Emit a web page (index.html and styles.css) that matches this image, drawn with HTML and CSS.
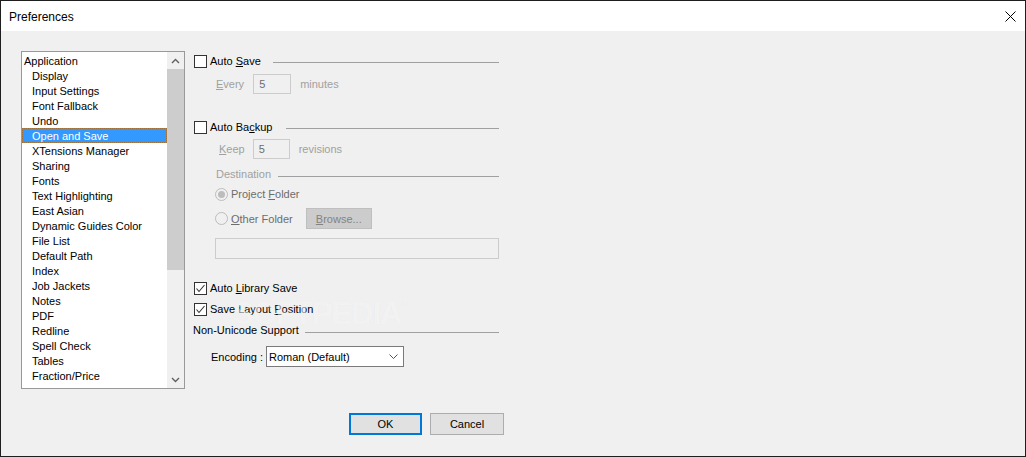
FILE: index.html
```html
<!DOCTYPE html>
<html>
<head>
<meta charset="utf-8">
<link rel="stylesheet" href="styles.css">
</head>
<body>
<div class="window">
  <div class="titlebar">
    <span class="title">Preferences</span>
    <svg class="close" width="11" height="11" viewBox="0 0 11 11"><path d="M0.5 0.5 L10.5 10.5 M10.5 0.5 L0.5 10.5" stroke="#000" stroke-width="1" fill="none"/></svg>
  </div>
  <div class="content">
    <div class="main">
      <div class="listbox">
        <ul class="items">
          <li class="root">Application</li>
          <li>Display</li>
          <li>Input Settings</li>
          <li>Font Fallback</li>
          <li>Undo</li>
          <li class="selected">Open and Save</li>
          <li>XTensions Manager</li>
          <li>Sharing</li>
          <li>Fonts</li>
          <li>Text Highlighting</li>
          <li>East Asian</li>
          <li>Dynamic Guides Color</li>
          <li>File List</li>
          <li>Default Path</li>
          <li>Index</li>
          <li>Job Jackets</li>
          <li>Notes</li>
          <li>PDF</li>
          <li>Redline</li>
          <li>Spell Check</li>
          <li>Tables</li>
          <li>Fraction/Price</li>
        </ul>
        <div class="scrollbar">
          <div class="sb-btn"><svg width="9" height="6" viewBox="0 0 9 6"><path d="M1 5 L4.5 1.5 L8 5" stroke="#606060" stroke-width="1.4" fill="none"/></svg></div>
          <div class="sb-track"><div class="thumb"></div></div>
          <div class="sb-btn"><svg width="9" height="6" viewBox="0 0 9 6"><path d="M1 1 L4.5 4.5 L8 1" stroke="#606060" stroke-width="1.4" fill="none"/></svg></div>
        </div>
      </div>

      <div class="panel">
        <div class="row check-row r-autosave">
          <span class="cb"></span><span class="label">Auto <u>S</u>ave</span><span class="rule rule-save"></span>
        </div>
        <div class="row field-row r-every">
          <span class="dim"><u>E</u>very</span><span class="num num-every">5</span><span class="dim unit">minutes</span>
        </div>

        <div class="row check-row r-autobackup">
          <span class="cb"></span><span class="label">Auto Ba<u>c</u>kup</span><span class="rule rule-backup"></span>
        </div>
        <div class="row field-row r-keep">
          <span class="dim"><u>K</u>eep</span><span class="num num-keep">5</span><span class="dim unit">revisions</span>
        </div>
        <div class="row group-row r-dest">
          <span class="dim">Destination</span><span class="rule rule-dest"></span>
        </div>
        <div class="row check-row r-project">
          <svg class="radio" width="13" height="13" viewBox="0 0 13 13"><circle cx="6.5" cy="6.5" r="6" fill="#f0f0f0" stroke="#bcbcbc"/><circle cx="6.5" cy="6.5" r="3.5" fill="#bcbcbc"/></svg>
          <span class="label dim2">Project <u>F</u>older</span>
        </div>
        <div class="row r-other">
          <svg class="radio" width="13" height="13" viewBox="0 0 13 13"><circle cx="6.5" cy="6.5" r="6" fill="#f0f0f0" stroke="#bcbcbc"/></svg>
          <span class="label dim2"><u>O</u>ther Folder</span>
          <span class="browse"><u>B</u>rowse...</span>
        </div>
        <div class="pathfield"></div>

        <div class="row check-row r-library">
          <span class="cb"><svg width="11" height="11" viewBox="0 0 11 11"><path d="M1.5 5.5 L4 8.5 L9.5 2" stroke="#333" stroke-width="1.1" fill="none"/></svg></span><span class="label">Auto <u>L</u>ibrary Save</span>
        </div>
        <div class="row check-row r-layout">
          <span class="cb"><svg width="11" height="11" viewBox="0 0 11 11"><path d="M1.5 5.5 L4 8.5 L9.5 2" stroke="#333" stroke-width="1.1" fill="none"/></svg></span><span class="label">Save Layout <u>P</u>osition</span>
        </div>
        <div class="row group-row r-unicode">
          <span>Non-Unicode Support</span><span class="rule rule-unicode"></span>
        </div>
        <div class="row r-encoding">
          <span>Encoding :</span>
          <div class="select"><span>Roman (Default)</span><svg width="9" height="6" viewBox="0 0 9 6"><path d="M0.5 0.5 L4.5 4.5 L8.5 0.5" stroke="#555" stroke-width="1" fill="none"/></svg></div>
        </div>
      </div>
    </div>
    <div class="buttons">
      <span class="btn btn-ok">OK</span>
      <span class="btn btn-cancel">Cancel</span>
    </div>
  </div>
  <div class="watermark">SOFTPEDIA<sup>®</sup></div>
</div>
</body>
</html>
```
FILE: styles.css
```css
* { box-sizing: border-box; }
html, body { margin: 0; padding: 0; }
body {
  width: 1026px;
  height: 457px;
  overflow: hidden;
  background: #f0f0f0;
  font-family: "Liberation Sans", Arial, sans-serif;
  font-size: 11px;
  color: #000;
}
u { text-decoration: underline; text-underline-offset: 1px; }

.window {
  width: 1026px;
  height: 457px;
  border: 1px solid #1e1e1e;
  background: #f0f0f0;
  position: relative;
  display: flex;
  flex-direction: column;
}

.titlebar {
  height: 30px;
  flex: none;
  background: #fff;
  display: flex;
  align-items: center;
  justify-content: space-between;
  padding: 1px 9px 0 8px;
}
.title { font-size: 12px; }
.close { display: block; }

.content { padding: 20px 0 0 20px; }
.main { display: flex; align-items: flex-start; }

.listbox {
  width: 164px;
  height: 338px;
  border: 1px solid #999;
  background: #fff;
  display: flex;
}
.items {
  flex: 1;
  margin: 0;
  padding: 1px 0 0 0;
  list-style: none;
}
.items li {
  height: 15px;
  line-height: 17px;
  padding-left: 10px;
  white-space: nowrap;
}
.items li.root { padding-left: 2px; }
.items li.selected {
  background: #3399ff;
  color: #fff;
  outline: 1px dotted #a0703a;
  outline-offset: -1px;
}

.scrollbar {
  width: 17px;
  flex: none;
  background: #f0f0f0;
  display: flex;
  flex-direction: column;
}
.sb-btn {
  height: 17px;
  display: flex;
  align-items: center;
  justify-content: center;
}
.sb-btn svg { display: block; }
.sb-track { flex: 1; }
.thumb { height: 201px; background: #cdcdcd; }

.panel {
  width: 306px;
  margin-left: 8px;
  display: flex;
  flex-direction: column;
}
.row { display: flex; align-items: center; white-space: nowrap; }
.check-row { height: 16px; }
.cb {
  width: 13px;
  height: 13px;
  flex: none;
  margin-left: 1px;
  border: 1px solid #333;
  background: #fff;
  display: flex;
  align-items: center;
  justify-content: center;
}
.cb svg { display: block; }
.label { margin-left: 3px; }
.rule { flex: 1; height: 1px; background: #a0a0a0; margin-top: 2px; }
.dim { color: #a0a0a0; }
.dim2 { color: #6d6d6d; }

.r-autosave { margin-top: 2px; }
.rule-save { margin-left: 12px; }
.field-row { height: 20px; }
.r-every { margin-top: 5px; padding-left: 23px; }
.num {
  height: 20px;
  border: 1px solid #ccc;
  background: #f0f0f0;
  color: #6d6d6d;
  padding-left: 5px;
  line-height: 18px;
}
.num-every { width: 38px; margin-left: 9px; }
.unit { margin-left: 9px; }

.r-autobackup { margin-top: 25px; }
.rule-backup { margin-left: 14px; }
.r-keep { margin-top: 4px; padding-left: 26px; }
.num-keep { width: 37px; margin-left: 8px; }

.group-row { height: 14px; }
.r-dest { margin-top: 8px; padding-left: 23px; }
.rule-dest { margin-left: 7px; margin-top: 5px; }

.radio { display: block; flex: none; margin-left: 22px; }
.r-project { margin-top: 5px; }
.r-other { margin-top: 6px; height: 21px; }
.browse {
  margin-left: 13px;
  width: 66px;
  height: 21px;
  background: #cccccc;
  border: 1px solid #bfbfbf;
  color: #838383;
  display: flex;
  align-items: center;
  justify-content: center;
}
.pathfield {
  margin-top: 9px;
  margin-left: 22px;
  width: 284px;
  height: 21px;
  border: 1px solid #ccc;
  background: #f0f0f0;
}

.r-library { margin-top: 21px; }
.r-layout { margin-top: 5px; }
.r-unicode { margin-top: 6px; }
.rule-unicode { margin-left: 6px; margin-top: 4px; }

.r-encoding { margin-top: 9px; padding-left: 18px; }
.select {
  margin-left: 3px;
  width: 138px;
  height: 21px;
  border: 1px solid #7a7a7a;
  background: #fff;
  display: flex;
  align-items: center;
  justify-content: space-between;
  padding: 0 5px 0 2px;
}
.select svg { display: block; }

.buttons {
  display: flex;
  gap: 8px;
  margin-top: 24px;
  padding-left: 328px;
}
.btn {
  height: 22px;
  background: #e1e1e1;
  display: flex;
  align-items: center;
  justify-content: center;
}
.btn-ok { width: 73px; border: 2px solid #0078d7; }
.btn-cancel { width: 74px; border: 1px solid #adadad; }

.watermark {
  position: absolute;
  left: 232px;
  top: 295px;
  font-family: "Liberation Sans Narrow", "Liberation Sans", Arial, sans-serif;
  font-size: 31px;
  font-weight: 700;
  letter-spacing: -1px;
  color: rgba(255, 255, 255, 0.55);
  text-shadow: 0 0 1px rgba(0, 0, 0, 0.05);
  pointer-events: none;
}
.watermark sup { font-size: 10px; font-weight: 400; vertical-align: top; position: relative; top: 2px; }
```
